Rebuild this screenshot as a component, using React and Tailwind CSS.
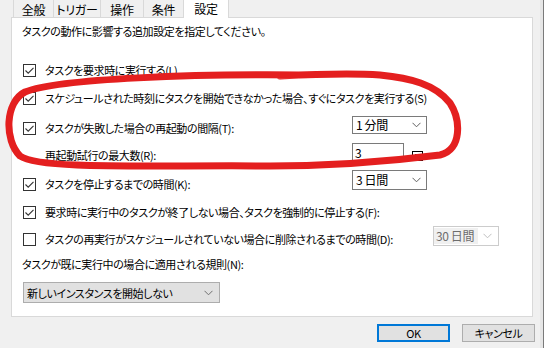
import React from "react";

const font = { fontFamily: '"Noto Sans CJK JP", "Noto Sans", sans-serif', fontFeatureSettings: '"palt"' };

function Check({ checked = true }) {
  return (
    <div className="w-[13px] h-[13px] border border-[#333333] bg-white shrink-0 flex items-center justify-center">
      {checked && (
        <svg width="11" height="11" viewBox="0 0 11 11">
          <path d="M1.5 5.5 L4.2 8.2 L9.5 2.8" fill="none" stroke="#333333" strokeWidth="1.1" />
        </svg>
      )}
    </div>
  );
}

function Chevron({ color = "#606060" }) {
  return (
    <svg width="9" height="6" viewBox="0 0 9 6" className="shrink-0">
      <path d="M0.5 0.8 L4.5 4.8 L8.5 0.8" fill="none" stroke={color} strokeWidth="1" />
    </svg>
  );
}

function Combo({ text, w, h }) {
  return (
    <div className={`${w} ${h} border border-[#7a7a7a] bg-white flex items-center justify-between pl-[3px] pr-[5px]`}>
      <span className="leading-[16px] text-[12px]">{text}</span>
      <Chevron />
    </div>
  );
}

export default function App() {
  return (
    <div className="relative w-[544px] h-[348px] bg-[#f0f0f0] overflow-hidden flex text-[11px] tracking-[-0.4px] text-black whitespace-nowrap" style={font}>
      <div className="w-[540px] flex flex-col">
        {/* Tabs */}
        <div className="h-[17px] pl-[13px] flex items-start relative z-10 text-[12px] tracking-[-0.2px]">
          <div className="w-[41px] h-[17px] border-l border-r border-[#d9d9d9] flex items-center justify-center pt-[3px] leading-[16px]">全般</div>
          <div className="w-[47px] h-[17px] border-r border-[#d9d9d9] flex items-center justify-center pt-[3px] leading-[16px]">トリガー</div>
          <div className="w-[43px] h-[17px] border-r border-[#d9d9d9] flex items-center justify-center pt-[3px] leading-[16px]">操作</div>
          <div className="w-[40px] h-[17px] border-r border-[#d9d9d9] flex items-center justify-center pt-[3px] leading-[16px]">条件</div>
          <div className="-ml-[1px] w-[46px] h-[18px] border-l border-r border-[#d9d9d9] bg-white flex items-center justify-center leading-[16px]">設定</div>
        </div>
        {/* Panel */}
        <div className="ml-[11px] w-[522px] h-[300px] border border-[#d9d9d9] bg-white flex flex-col">
          <div className="mt-[5px] h-[16px] pl-[10px] leading-[16px]">タスクの動作に影響する追加設定を指定してください。</div>

          <div className="mt-[21px] h-[20px] pl-[11px] flex items-center gap-[9px]">
            <Check />
            <span className="leading-[16px]">タスクを要求時に実行する(L)</span>
          </div>

          <div className="mt-[8px] h-[20px] pl-[11px] flex items-center gap-[9px]">
            <Check />
            <span className="leading-[16px]">スケジュールされた時刻にタスクを開始できなかった場合、すぐにタスクを実行する(S)</span>
          </div>

          <div className="mt-[10px] h-[20px] pl-[11px] flex items-center">
            <div className="w-[329px] shrink-0 flex items-center gap-[9px]">
              <Check />
              <span className="leading-[16px]">タスクが失敗した場合の再起動の間隔(T):</span>
            </div>
            <div className="self-start -mt-[2px]">
              <Combo text="1 分間" w="w-[75px]" h="h-[18px]" />
            </div>
          </div>

          <div className="mt-[7px] h-[20px] pl-[33px] flex items-center">
            <div className="w-[307px] shrink-0 leading-[16px]">再起動試行の最大数(R):</div>
            <div className="self-start -mt-[2px] shrink-0 w-[52px] h-[19px] border border-[#7a7a7a] bg-white pl-[2px] flex items-center leading-[16px] text-[12px]">3</div>
            <div className="ml-[8px] mt-[2px] shrink-0 w-[11px] h-[10px] border border-black flex items-center justify-center">
              <div className="w-[5px] h-[4px] shrink-0 border border-black" />
            </div>
          </div>

          <div className="mt-[9px] h-[20px] pl-[11px] flex items-center">
            <div className="w-[329px] shrink-0 flex items-center gap-[9px]">
              <Check />
              <span className="leading-[16px]">タスクを停止するまでの時間(K):</span>
            </div>
            <div className="self-start -mt-[4px]">
              <Combo text="3 日間" w="w-[75px]" h="h-[20px]" />
            </div>
          </div>

          <div className="mt-[8px] h-[20px] pl-[11px] flex items-center gap-[9px]">
            <Check />
            <span className="leading-[16px]">要求時に実行中のタスクが終了しない場合、タスクを強制的に停止する(F):</span>
          </div>

          <div className="mt-[7px] h-[20px] pl-[11px] flex items-center">
            <div className="w-[410px] shrink-0 flex items-center gap-[9px]">
              <Check checked={false} />
              <span className="leading-[16px]">タスクの再実行がスケジュールされていない場合に削除されるまでの時間(D):</span>
            </div>
            <div className="self-start -mt-[3px] shrink-0 w-[66px] h-[20px] border border-[#cccccc] bg-white flex items-center justify-between pr-[6px]">
              <span className="h-[16px] w-[44px] bg-[#f0f0f0] text-[#6d6d6d] leading-[16px] pl-[2px] text-[12px]">30 日間</span>
              <Chevron color="#bfbfbf" />
            </div>
          </div>

          <div className="mt-[7px] h-[16px] pl-[10px] leading-[16px]">タスクが既に実行中の場合に適用される規則(N):</div>

          <div className="mt-[10px] ml-[11px] w-[197px] h-[21px] border border-[#adadad] bg-[#e1e1e1] flex items-center justify-between pl-[3px] pr-[6px]">
            <span className="leading-[16px]">新しいインスタンスを開始しない</span>
            <Chevron color="#707070" />
          </div>
        </div>
        {/* Buttons */}
        <div className="mt-[7px] flex justify-end pr-[5px] gap-[12px]">
          <div className="w-[73px] h-[18px] border-2 border-[#0078d7] bg-[#e1e1e1] flex items-center justify-center leading-[14px]">OK</div>
          <div className="w-[73px] h-[18px] border border-[#adadad] bg-[#e1e1e1] flex items-center justify-center leading-[14px]">キャンセル</div>
        </div>
      </div>
      <div className="w-[3px] bg-[#e6e6e6]" />
      <div className="w-[1px] bg-[#7a7a7a]" />

      {/* Red hand-drawn annotation */}
      <svg className="absolute left-0 top-0 pointer-events-none" width="544" height="348" viewBox="0 0 544 348">
        <path
          d="M300 75 C200 74, 60 78, 25 92 C5 102, 4 140, 20 156 C40 170, 150 165, 270 166 C340 166, 400 160, 440 155 C462 150, 461 120, 450 103 C435 84, 410 78, 380 75 C350 73, 320 74, 280 76"
          fill="none"
          stroke="#e41f1f"
          strokeWidth="7"
          strokeLinecap="round"
        />
      </svg>
    </div>
  );
}
